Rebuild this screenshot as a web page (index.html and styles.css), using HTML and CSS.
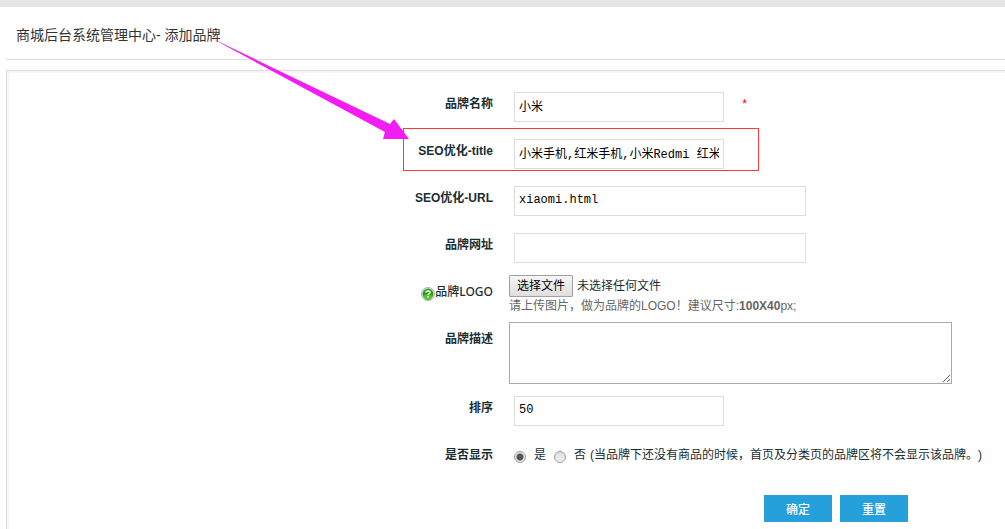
FILE: index.html
```html
<!DOCTYPE html>
<html lang="zh-CN">
<head>
<meta charset="utf-8">
<title>商城后台系统管理中心 - 添加品牌</title>
<link rel="stylesheet" href="styles.css">
</head>
<body>
<header class="page-head">
  <h1 class="page-title">商城后台系统管理中心- 添加品牌</h1>
</header>
<main class="panel">
  <form>
    <div class="row">
      <label class="name" for="brand">品牌名称</label>
      <div class="field"><input class="text" id="brand" type="text" value="小米"><span class="required">*</span></div>
    </div>
    <div class="row">
      <label class="name" for="seo-title">SEO优化-title</label>
      <div class="field"><input class="text" id="seo-title" type="text" value="小米手机,红米手机,小米Redmi 红米"></div>
    </div>
    <div class="row">
      <label class="name" for="seo-url">SEO优化-URL</label>
      <div class="field"><input class="text wide" id="seo-url" type="text" value="xiaomi.html"></div>
    </div>
    <div class="row">
      <label class="name" for="site">品牌网址</label>
      <div class="field"><input class="text wide" id="site" type="text"></div>
    </div>
    <div class="row">
      <label class="name logo-name" for="logo"><svg class="help" viewBox="0 0 14 14" aria-hidden="true"><circle cx="7" cy="7" r="6.5" fill="#eee" stroke="#aaa"/><circle cx="7" cy="7" r="5.4" fill="#299c13"/><path d="M2.5 8.5a4.5 4.5 0 0 0 9 0Q7 6.500 2.500 8.500z" fill="#4cc52b"/><path d="M5 5.500C5 3.400 9 3.400 9 5.500C9 6.700 7 6.600 7 8M7 9.300V10.700" fill="none" stroke="#fff" stroke-width="1.500"/></svg>品牌LOGO</label>
      <div class="block-field">
        <div class="file"><input class="file-input" id="logo" type="file"><label class="file-button" for="logo">选择文件</label><span>未选择任何文件</span></div>
        <p class="hint">请上传图片，做为品牌的LOGO！建议尺寸:<b>100X40</b>px;</p>
      </div>
    </div>
    <div class="row row-tall">
      <label class="name" for="desc">品牌描述</label>
      <div class="block-field"><textarea class="area" id="desc"></textarea></div>
    </div>
    <div class="row">
      <label class="name" for="sort">排序</label>
      <div class="field"><input class="text" id="sort" type="text" value="50"></div>
    </div>
    <div class="row" role="radiogroup" aria-labelledby="show-name">
      <span class="name" id="show-name">是否显示</span>
      <div class="choices">
        <input class="radio" id="yes" type="radio" name="show" checked><label for="yes">是</label>
        <input class="radio" id="no" type="radio" name="show"><label for="no">否</label>
        <span class="note">(当品牌下还没有商品的时候，首页及分类页的品牌区将不会显示该品牌。)</span>
      </div>
    </div>
    <div class="row">
      <span></span>
      <div class="actions">
        <button class="button" type="submit">确定</button>
        <button class="button" type="reset">重置</button>
      </div>
    </div>
  </form>
</main>
<svg class="callout" width="770" height="180" aria-hidden="true">
  <rect x="403.500" y="128.500" width="355" height="42" fill="none" stroke="#f83a3a"/>
  <path d="M211 38L385 132L383 139H409L394 119L390 124Z" fill="#f31cf3"/>
</svg>
</body>
</html>
```
FILE: styles.css
```css
* {
  box-sizing: border-box;
}

body {
  display: flex;
  flex-direction: column;
  min-height: 100vh;
  margin: 0;
  border-top: 7px solid #e6e6e6;
  background: #fff;
  color: #192e32;
  font: 12px/18px "Liberation Sans", "Noto Sans CJK SC", sans-serif;
}

.page-head {
  margin-left: 6px;
  padding: 18px 10px 14px;
  border-bottom: 1px solid #dcdcdc;
}

.page-title {
  margin: 0;
  color: #333;
  font-size: 14px;
  font-weight: 400;
  line-height: 20px;
}

.panel {
  flex: 1;
  margin: 10px 0 0 6px;
  padding-top: 14px;
  border-top: 1px solid #ddd;
  border-left: 1px solid #ddd;
  box-shadow: inset 2px 2px 0 #f5f5f5;
}

.row {
  display: grid;
  grid-template-columns: 49% 1fr;
  min-height: 47px;
}

.row-tall {
  min-height: 69px;
}

.name {
  padding-right: 3px;
  font-weight: bold;
  line-height: 38px;
  text-align: right;
}

.logo-name {
  display: flex;
  align-items: center;
  justify-content: flex-end;
  height: 38px;
  font-family: "Noto Sans", "Noto Sans CJK SC", sans-serif;
  font-weight: 500;
}

.help {
  width: 14px;
  height: 14px;
  margin-top: 4px;
}

.field {
  display: flex;
  align-items: flex-start;
  padding: 7px 0 0 18px;
}

.text {
  width: 210px;
  height: 30px;
  padding: 0 4px 2px;
  border: 1px solid #ddd;
  background: #fff;
  color: #000;
  font: 12px "Liberation Mono", "Noto Sans CJK SC", monospace;
}

.wide {
  width: 292px;
}

.required {
  padding: 4px 0 0 17px;
  color: #f00;
  font-family: "Liberation Mono", monospace;
}

.block-field {
  padding: 2px 0 0 13px;
}

.file {
  display: flex;
  gap: 4px;
  position: relative;
  line-height: 22px;
}

.file-input {
  position: absolute;
  width: 64px;
  height: 22px;
  opacity: 0;
}

.file-button {
  padding: 0 7px;
  border: 1px solid #a0a0a0;
  border-radius: 1px;
  background: linear-gradient(#f6f6f6, #dedede);
  color: #000;
  line-height: 20px;
}

.hint {
  margin: 0;
  color: #666;
}

.area {
  display: block;
  width: 443px;
  height: 62px;
  border: 1px solid #a9a9a9;
  background: #fff;
  font: 12px "Liberation Mono", "Noto Sans CJK SC", monospace;
  resize: both;
}

.choices {
  display: flex;
  gap: 8px;
  padding-left: 18px;
  line-height: 38px;
}

.radio {
  appearance: none;
  width: 12px;
  height: 12px;
  margin: 15px 0 0;
  border: 1px solid #a0a0a0;
  border-radius: 50%;
  background: linear-gradient(#ddd, #eee);
}

.radio:checked {
  background: radial-gradient(#555 0 3px, #e6e6e6 4px);
}

.note {
  margin-left: -4px;
  text-spacing-trim: space-all;
}

.actions {
  display: flex;
  gap: 8px;
  padding: 12px 0 0 268px;
}

.button {
  width: 68px;
  height: 27px;
  padding: 0;
  border: 0;
  background: #25a0da;
  color: #fff;
  font: 500 12px "Noto Sans CJK SC", sans-serif;
}

.callout {
  position: absolute;
  top: 0;
  left: 0;
  pointer-events: none;
}
```
